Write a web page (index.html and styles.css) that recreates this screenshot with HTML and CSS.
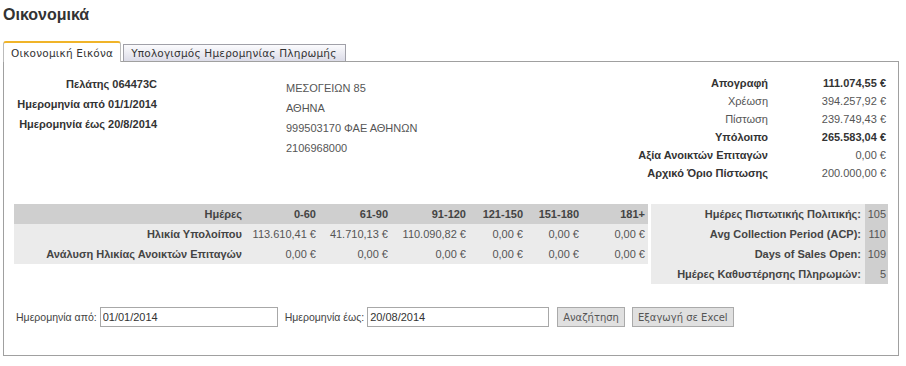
FILE: index.html
```html
<!DOCTYPE html>
<html lang="el">
<head>
    <meta charset="UTF-8">
    <meta name="viewport" content="width=device-width, initial-scale=1.0">
    <title>Οικονομικά</title>
    <link rel="stylesheet" href="styles.css">
</head>
<body>
    <div class="page">
        <h1 class="page-title">Οικονομικά</h1>
        <div class="tabs">
            <div class="tab tab-active">Οικονομική Εικόνα</div>
            <div class="tab">Υπολογισμός Ημερομηνίας Πληρωμής</div>
        </div>
        <div class="panel">
            <div class="summary-top">
                <div class="customer-info">
                    <p>Πελάτης 064473C</p>
                    <p>Ημερομηνία από 01/1/2014</p>
                    <p>Ημερομηνία έως 20/8/2014</p>
                </div>
                <div class="address">
                    <p>ΜΕΣΟΓΕΙΩΝ 85</p>
                    <p>ΑΘΗΝΑ</p>
                    <p>999503170 ΦΑΕ ΑΘΗΝΩΝ</p>
                    <p>2106968000</p>
                </div>
                <table class="balance">
                    <tr class="strong"><td>Απογραφή</td><td>111.074,55 €</td></tr>
                    <tr><td>Χρέωση</td><td>394.257,92 €</td></tr>
                    <tr><td>Πίστωση</td><td>239.749,43 €</td></tr>
                    <tr class="strong"><td>Υπόλοιπο</td><td>265.583,04 €</td></tr>
                    <tr><td class="label-bold">Αξία Ανοικτών Επιταγών</td><td>0,00 €</td></tr>
                    <tr><td class="label-bold">Αρχικό Όριο Πίστωσης</td><td>200.000,00 €</td></tr>
                </table>
            </div>
            <div class="aging-section">
                <table class="aging">
                    <colgroup>
                        <col style="width:231px">
                        <col style="width:74px">
                        <col style="width:72px">
                        <col style="width:78px">
                        <col style="width:57px">
                        <col style="width:56px">
                        <col style="width:66px">
                    </colgroup>
                    <tr class="aging-head">
                        <th>Ημέρες</th><th>0-60</th><th>61-90</th><th>91-120</th><th>121-150</th><th>151-180</th><th>181+</th>
                    </tr>
                    <tr>
                        <th>Ηλικία Υπολοίπου</th><td>113.610,41 €</td><td>41.710,13 €</td><td>110.090,82 €</td><td>0,00 €</td><td>0,00 €</td><td>0,00 €</td>
                    </tr>
                    <tr>
                        <th>Ανάλυση Ηλικίας Ανοικτών Επιταγών</th><td>0,00 €</td><td>0,00 €</td><td>0,00 €</td><td>0,00 €</td><td>0,00 €</td><td>0,00 €</td>
                    </tr>
                </table>
                <table class="metrics">
                    <tr><th>Ημέρες Πιστωτικής Πολιτικής:</th><td>105</td></tr>
                    <tr><th>Avg Collection Period (ACP):</th><td>110</td></tr>
                    <tr><th>Days of Sales Open:</th><td>109</td></tr>
                    <tr><th>Ημέρες Καθυστέρησης Πληρωμών:</th><td>5</td></tr>
                </table>
            </div>
            <form class="search-form" onsubmit="return false;">
                <label for="date-from">Ημερομηνία από:</label>
                <input id="date-from" class="date-input" type="text" value="01/01/2014">
                <label for="date-to" class="label-to">Ημερομηνία έως:</label>
                <input id="date-to" class="date-input date-input-wide" type="text" value="20/08/2014">
                <button type="submit" class="btn btn-search">Αναζήτηση</button>
                <button type="button" class="btn">Εξαγωγή σε Excel</button>
            </form>
        </div>
    </div>
</body>
</html>
```

FILE: styles.css
```css
body {
    margin: 0;
    background: #fff;
    font-family: 'Liberation Sans', Arial, sans-serif;
    font-size: 11px;
    color: #555;
}
.page {
    padding: 0 7px 0 3px;
}
.page-title {
    margin: 5px 0 0 0;
    font-size: 16px;
    line-height: 20px;
    font-weight: bold;
    color: #333;
}
.tabs {
    display: flex;
    align-items: flex-end;
    margin-top: 16px;
    height: 20px;
    position: relative;
    z-index: 1;
}
.tab {
    font-family: 'DejaVu Sans', Verdana, sans-serif;
    font-size: 10.5px;
    letter-spacing: 0.2px;
    color: #333;
    height: 16px;
    line-height: 16px;
    padding: 0 8px 0 7px;
    border: 1px solid #a0a0a8;
    border-bottom: none;
    background: linear-gradient(#fbfbfd, #dcdce8);
    margin-right: 2px;
}
.tab-active {
    height: 19px;
    line-height: 20px;
    padding: 0 7px 0 7px;
    background: #fff;
    border-top: 2px solid #f0b429;
    border-left: 1px solid #bbb;
    border-right: 1px solid #bbb;
    border-radius: 3px 3px 0 0;
    margin-bottom: -1px;
}
.panel {
    border: 1px solid #a0a0a0;
    padding: 12px 10px 28px 10px;
}
.summary-top {
    display: flex;
    align-items: flex-start;
}
.summary-top p {
    margin: 0;
}
.customer-info {
    width: 143px;
    text-align: right;
    font-weight: bold;
    color: #333;
    line-height: 20px;
}
.address {
    margin: 4px 0 0 129px;
    line-height: 20px;
}
.balance {
    margin-left: auto;
    margin-right: 2px;
    border-collapse: collapse;
}
.balance td {
    height: 18px;
    padding: 0;
    text-align: right;
}
.balance td:last-child {
    width: 118px;
}
.balance .strong td,
.balance .label-bold {
    font-weight: bold;
    color: #333;
}
.aging-section {
    display: flex;
    align-items: flex-start;
    margin-top: 22px;
}
.aging,
.metrics {
    border-collapse: collapse;
    table-layout: fixed;
}
.aging {
    width: 634px;
}
.aging th,
.aging td,
.metrics th,
.metrics td {
    height: 20px;
    padding: 0 3px 0 0;
    text-align: right;
    white-space: nowrap;
}
.aging th,
.metrics th {
    font-weight: bold;
    color: #444;
}
.aging tr {
    background: #ebebeb;
}
.aging .aging-head {
    background: #cfcfcf;
}
.metrics {
    margin-left: 3px;
    width: 237px;
}
.metrics th {
    width: 210px;
    padding-right: 4px;
    background: #ebebeb;
}
.metrics td {
    padding-right: 2px;
    background: #cfcfcf;
}
.search-form {
    display: flex;
    align-items: center;
    margin-top: 23px;
    padding-left: 2px;
    height: 20px;
    color: #444;
}
.search-form label {
    font-size: 10.5px;
    margin-right: 3px;
}
.label-to {
    margin-left: 7px;
}
.date-input {
    box-sizing: border-box;
    width: 178px;
    height: 20px;
    border: 1px solid #a8a8a8;
    padding: 0 2px;
    font-family: 'Liberation Sans', Arial, sans-serif;
    font-size: 11px;
    color: #333;
}
.date-input-wide {
    width: 182px;
}
.btn {
    box-sizing: border-box;
    height: 20px;
    margin-left: 7px;
    padding: 0 5px;
    border: 1px solid #aaa;
    background: #e0e0e0;
    font-family: 'DejaVu Sans', Verdana, sans-serif;
    font-size: 10px;
    color: #555;
    cursor: pointer;
}
.btn-search {
    margin-left: 8px;
}
```
